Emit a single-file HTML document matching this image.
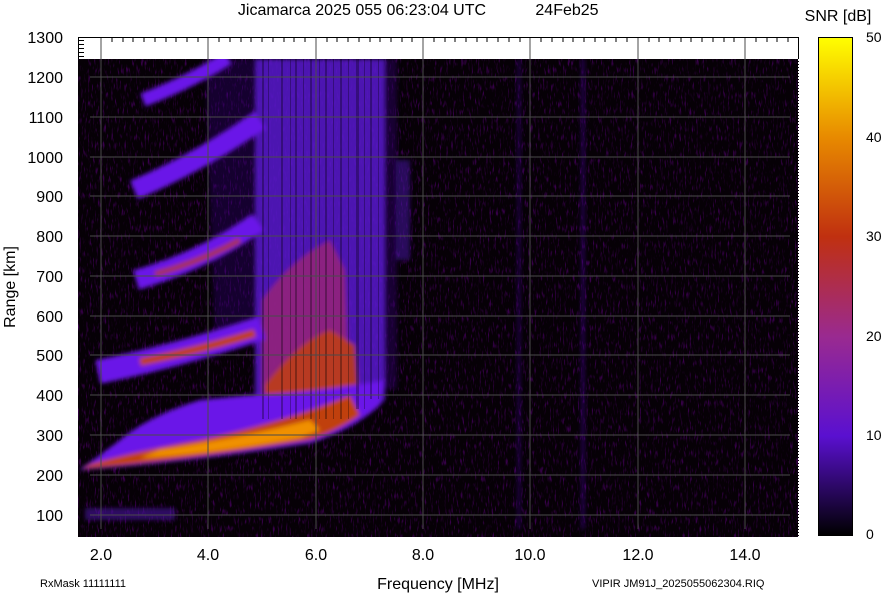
<!DOCTYPE html>
<html><head><meta charset="utf-8"><style>
body{margin:0;background:#fff;width:884px;height:595px;overflow:hidden;font-family:"Liberation Sans",sans-serif}
svg{display:block}
text{font-family:"Liberation Sans",sans-serif;fill:#000}
</style></head><body>
<svg width="884" height="595" viewBox="0 0 884 595">
<defs>
<linearGradient id="cb" x1="0" y1="1" x2="0" y2="0">
<stop offset="0" stop-color="#000"/>
<stop offset="0.2" stop-color="#5a10d0"/>
<stop offset="0.4" stop-color="#9a2a90"/>
<stop offset="0.6" stop-color="#c03010"/>
<stop offset="0.8" stop-color="#e88a00"/>
<stop offset="1" stop-color="#ffff00"/>
</linearGradient>
<filter id="b1"><feGaussianBlur stdDeviation="2"/></filter>
<filter id="nz" x="0" y="0" width="100%" height="100%">
<feTurbulence type="fractalNoise" baseFrequency="0.6 0.12" numOctaves="2" seed="3"/>
<feColorMatrix values="0.5 0 0 0 0  0 0 0 0 0  1 0 0 0 0  4 0 0 0 -2.2"/>
</filter>
<clipPath id="pc"><rect x="78" y="59" width="720" height="478"/></clipPath>
</defs>
<text x="362" y="15" font-size="16" text-anchor="middle">Jicamarca 2025 055 06:23:04 UTC</text>
<text x="567" y="15" font-size="16" text-anchor="middle">24Feb25</text>
<text x="838" y="21" font-size="16" text-anchor="middle">SNR [dB]</text>
<rect x="78" y="37" width="721" height="500" fill="#fff"/>
<rect x="78" y="59" width="721" height="478" fill="#060006"/>
<g clip-path="url(#pc)">
<rect x="78" y="59" width="721" height="478" filter="url(#nz)" opacity="0.3"/>
<g filter="url(#b1)">
<path d="M255,59 L385,59 L385,400 Q360,425 330,435 L255,440 Z" fill="#5a14d0" opacity="0.85"/>
<path d="M205,59 L255,59 L255,330 L215,340 Z" fill="#3a0c90" opacity="0.3"/>
<rect x="385" y="59" width="12" height="330" fill="#2a0860" opacity="0.5"/>
<rect x="396" y="160" width="14" height="100" fill="#4a10b0" opacity="0.5"/>
<path d="M262,300 Q290,260 330,240 L345,270 L350,410 L262,425 Z" fill="#a02870" opacity="0.75"/>
<path d="M265,385 Q300,340 330,330 L355,345 L360,418 L270,435 Z" fill="#c04010" opacity="0.85"/>
<path d="M79,470 Q190,462 311,443 Q355,428 380,405 L385,380 Q300,395 250,395 L200,400 Q150,415 120,440 L100,455 Z" fill="#6a18e8"/>
<path d="M82,469 Q190,460 310,440 Q340,430 360,415 L350,395 Q290,420 200,440 Q140,450 90,464 Z" fill="#c04010"/>
<path d="M140,458 Q210,454 300,438 L320,430 L310,420 Q240,438 160,450 Z" fill="#f09000"/>
<g fill="none" stroke-linecap="butt">
<path d="M98,372 Q180,355 262,328" stroke="#6a18e8" stroke-width="24"/>
<path d="M140,362 Q200,350 255,333" stroke="#c04010" stroke-width="8"/>
<path d="M136,280 Q205,260 258,222" stroke="#6a18e8" stroke-width="20"/>
<path d="M155,274 Q200,262 240,240" stroke="#a83050" stroke-width="6"/>
<path d="M134,190 Q200,162 260,120" stroke="#6a18e8" stroke-width="20"/>
<path d="M143,100 Q190,82 228,58" stroke="#6a18e8" stroke-width="14"/>
</g>
<rect x="85" y="508" width="90" height="12" fill="#4a10a0" opacity="0.6"/>
<rect x="518" y="59" width="2" height="470" fill="#4a10b0" opacity="0.6"/>
<rect x="582" y="59" width="2" height="470" fill="#5a14d0" opacity="0.6"/>
</g>
<g fill="#000" opacity="0.3">
<rect x="262" y="59" width="2" height="360"/><rect x="268" y="59" width="1" height="360"/>
<rect x="281" y="59" width="2" height="360"/><rect x="290" y="59" width="1" height="360"/>
<rect x="295" y="59" width="2" height="360"/><rect x="303" y="59" width="1" height="360"/>
<rect x="310" y="59" width="2" height="360"/><rect x="319" y="59" width="1" height="360"/>
<rect x="325" y="59" width="2" height="360"/><rect x="333" y="59" width="1" height="360"/>
<rect x="340" y="59" width="2" height="360"/><rect x="348" y="59" width="1" height="360"/>
<rect x="356" y="59" width="3" height="350"/><rect x="364" y="59" width="1" height="350"/>
<rect x="370" y="59" width="2" height="340"/><rect x="378" y="59" width="1" height="340"/>
</g>
</g>
<g stroke="#4a4a4a" stroke-width="1">
<line x1="101" y1="37" x2="101" y2="529"/><line x1="208" y1="37" x2="208" y2="529"/>
<line x1="316" y1="37" x2="316" y2="529"/><line x1="423" y1="37" x2="423" y2="529"/>
<line x1="530" y1="37" x2="530" y2="529"/><line x1="638" y1="37" x2="638" y2="529"/>
<line x1="745" y1="37" x2="745" y2="529"/>
<line x1="90" y1="77" x2="790" y2="77"/><line x1="90" y1="117" x2="790" y2="117"/>
<line x1="90" y1="157" x2="790" y2="157"/><line x1="90" y1="196" x2="790" y2="196"/>
<line x1="90" y1="236" x2="790" y2="236"/><line x1="90" y1="276" x2="790" y2="276"/>
<line x1="90" y1="316" x2="790" y2="316"/><line x1="90" y1="355" x2="790" y2="355"/>
<line x1="90" y1="395" x2="790" y2="395"/><line x1="90" y1="435" x2="790" y2="435"/>
<line x1="90" y1="475" x2="790" y2="475"/><line x1="90" y1="515" x2="790" y2="515"/>
</g>
<g stroke="#000" stroke-width="1">
<line x1="78" y1="37.5" x2="799" y2="37.5"/>
<line x1="112" y1="37" x2="112" y2="42"/><line x1="123" y1="37" x2="123" y2="42"/><line x1="133" y1="37" x2="133" y2="42"/><line x1="144" y1="37" x2="144" y2="42"/><line x1="155" y1="37" x2="155" y2="42"/><line x1="166" y1="37" x2="166" y2="42"/><line x1="176" y1="37" x2="176" y2="42"/><line x1="187" y1="37" x2="187" y2="42"/><line x1="198" y1="37" x2="198" y2="42"/>
<line x1="219" y1="37" x2="219" y2="42"/><line x1="230" y1="37" x2="230" y2="42"/><line x1="241" y1="37" x2="241" y2="42"/><line x1="251" y1="37" x2="251" y2="42"/><line x1="262" y1="37" x2="262" y2="42"/><line x1="273" y1="37" x2="273" y2="42"/><line x1="284" y1="37" x2="284" y2="42"/><line x1="294" y1="37" x2="294" y2="42"/><line x1="305" y1="37" x2="305" y2="42"/>
<line x1="327" y1="37" x2="327" y2="42"/><line x1="337" y1="37" x2="337" y2="42"/><line x1="348" y1="37" x2="348" y2="42"/><line x1="359" y1="37" x2="359" y2="42"/><line x1="370" y1="37" x2="370" y2="42"/><line x1="380" y1="37" x2="380" y2="42"/><line x1="391" y1="37" x2="391" y2="42"/><line x1="402" y1="37" x2="402" y2="42"/><line x1="412" y1="37" x2="412" y2="42"/>
<line x1="434" y1="37" x2="434" y2="42"/><line x1="445" y1="37" x2="445" y2="42"/><line x1="455" y1="37" x2="455" y2="42"/><line x1="466" y1="37" x2="466" y2="42"/><line x1="477" y1="37" x2="477" y2="42"/><line x1="487" y1="37" x2="487" y2="42"/><line x1="498" y1="37" x2="498" y2="42"/><line x1="509" y1="37" x2="509" y2="42"/><line x1="520" y1="37" x2="520" y2="42"/>
<line x1="541" y1="37" x2="541" y2="42"/><line x1="552" y1="37" x2="552" y2="42"/><line x1="563" y1="37" x2="563" y2="42"/><line x1="573" y1="37" x2="573" y2="42"/><line x1="584" y1="37" x2="584" y2="42"/><line x1="595" y1="37" x2="595" y2="42"/><line x1="605" y1="37" x2="605" y2="42"/><line x1="616" y1="37" x2="616" y2="42"/><line x1="627" y1="37" x2="627" y2="42"/>
<line x1="649" y1="37" x2="649" y2="42"/><line x1="659" y1="37" x2="659" y2="42"/><line x1="670" y1="37" x2="670" y2="42"/><line x1="681" y1="37" x2="681" y2="42"/><line x1="691" y1="37" x2="691" y2="42"/><line x1="702" y1="37" x2="702" y2="42"/><line x1="713" y1="37" x2="713" y2="42"/><line x1="724" y1="37" x2="724" y2="42"/><line x1="734" y1="37" x2="734" y2="42"/>
<line x1="756" y1="37" x2="756" y2="42"/><line x1="767" y1="37" x2="767" y2="42"/><line x1="777" y1="37" x2="777" y2="42"/><line x1="788" y1="37" x2="788" y2="42"/>
<line x1="78.5" y1="37" x2="78.5" y2="59"/>
<line x1="79" y1="40.5" x2="84" y2="40.5"/><line x1="79" y1="44.5" x2="84" y2="44.5"/><line x1="79" y1="48.5" x2="84" y2="48.5"/><line x1="79" y1="52.5" x2="84" y2="52.5"/><line x1="79" y1="56.5" x2="84" y2="56.5"/>
<line x1="798.5" y1="37" x2="798.5" y2="59"/>
<line x1="798.5" y1="59" x2="798.5" y2="537" stroke="#fff" stroke-dasharray="2,1"/>
</g>
<g font-size="16" text-anchor="end">
<text x="63" y="43">1300</text><text x="63" y="83">1200</text><text x="63" y="123">1100</text>
<text x="63" y="163">1000</text><text x="63" y="202">900</text><text x="63" y="242">800</text>
<text x="63" y="282">700</text><text x="63" y="322">600</text><text x="63" y="361">500</text>
<text x="63" y="401">400</text><text x="63" y="441">300</text><text x="63" y="481">200</text>
<text x="63" y="521">100</text>
</g>
<text transform="translate(15,287) rotate(-90)" font-size="16" text-anchor="middle">Range [km]</text>
<g font-size="16" text-anchor="middle">
<text x="101" y="560">2.0</text><text x="208" y="560">4.0</text><text x="316" y="560">6.0</text>
<text x="423" y="560">8.0</text><text x="530" y="560">10.0</text><text x="638" y="560">12.0</text>
<text x="745" y="560">14.0</text>
</g>
<text x="438" y="589" font-size="16" text-anchor="middle">Frequency [MHz]</text>
<text x="40" y="587" font-size="11">RxMask 11111111</text>
<text x="592" y="587" font-size="11">VIPIR  JM91J_2025055062304.RIQ</text>
<rect x="818.5" y="37.5" width="34" height="498" fill="url(#cb)" stroke="#000"/>
<g font-size="14">
<text x="866" y="42">50</text><text x="866" y="142">40</text><text x="866" y="241">30</text>
<text x="866" y="341">20</text><text x="866" y="440">10</text><text x="866" y="539">0</text>
</g>
</svg>
</body></html>
